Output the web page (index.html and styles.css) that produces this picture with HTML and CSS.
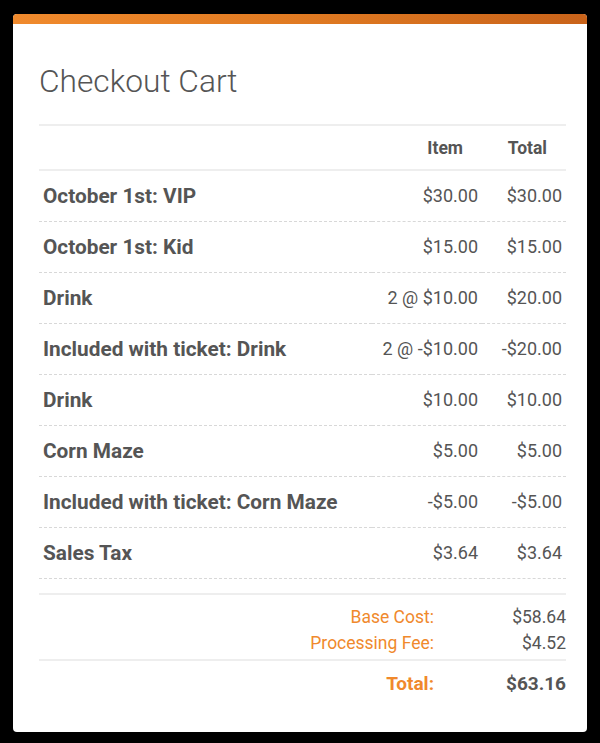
FILE: index.html
```html
<!DOCTYPE html>
<html>
<head>
<meta charset="utf-8">
<link rel="stylesheet" href="styles.css">
</head>
<body>
<div class="card">
  <div class="bar"></div>
  <div class="content">
    <h1 class="title">Checkout Cart</h1>
    <table class="cart">
      <thead>
        <tr><th class="name"></th><th class="item">Item</th><th class="total">Total</th></tr>
      </thead>
      <tbody>
        <tr><td class="name">October 1st: VIP</td><td class="item">$30.00</td><td class="total">$30.00</td></tr>
        <tr><td class="name">October 1st: Kid</td><td class="item">$15.00</td><td class="total">$15.00</td></tr>
        <tr><td class="name">Drink</td><td class="item">2 @ $10.00</td><td class="total">$20.00</td></tr>
        <tr><td class="name">Included with ticket: Drink</td><td class="item">2 @ -$10.00</td><td class="total">-$20.00</td></tr>
        <tr><td class="name">Drink</td><td class="item">$10.00</td><td class="total">$10.00</td></tr>
        <tr><td class="name">Corn Maze</td><td class="item">$5.00</td><td class="total">$5.00</td></tr>
        <tr><td class="name">Included with ticket: Corn Maze</td><td class="item">-$5.00</td><td class="total">-$5.00</td></tr>
        <tr><td class="name">Sales Tax</td><td class="item">$3.64</td><td class="total">$3.64</td></tr>
      </tbody>
    </table>
    <div class="summary">
      <div class="sum-row"><span class="label">Base Cost:</span><span class="value">$58.64</span></div>
      <div class="sum-row"><span class="label">Processing Fee:</span><span class="value">$4.52</span></div>
    </div>
    <div class="grand">
      <div class="sum-row"><span class="label">Total:</span><span class="value">$63.16</span></div>
    </div>
  </div>
</div>
</body>
</html>
```

FILE: styles.css
```css
html, body {
  margin: 0;
  padding: 0;
  background: #000;
}
body {
  font-family: Roboto, "Liberation Sans", sans-serif;
  color: #555;
}
.card {
  margin: 14px 0 0 13px;
  width: 574px;
  height: 718px;
  background: #fff;
  border-radius: 4px;
  overflow: hidden;
}
.bar {
  height: 10px;
  background: linear-gradient(90deg, #f08a2d 0%, #e07a22 50%, #c9631a 100%);
}
.content {
  padding: 0 21px 0 26px;
}
.title {
  margin: 40px 0 0 0;
  font-size: 31.7px;
  line-height: 36px;
  font-weight: 300;
  color: #555;
  padding-bottom: 24px;
  border-bottom: 2px solid #eee;
}
.cart {
  width: 100%;
  border-collapse: collapse;
}
.cart th,
.cart td {
  box-sizing: border-box;
}
.cart th {
  height: 44px;
  font-size: 17.5px;
  font-weight: 700;
  text-align: right;
  padding: 0 19px 0 4px;
  border-bottom: 2px solid #eee;
}
.cart td {
  height: 51px;
  padding: 0 4px;
  border-bottom: 1px dashed #d8d8d8;
  font-size: 18px;
  text-align: right;
  white-space: nowrap;
}
.cart td.name {
  text-align: left;
  font-size: 20.8px;
  font-weight: 700;
}
.cart .item {
  width: 110px;
}
.cart .total {
  width: 84px;
}
.summary {
  margin-top: 14px;
  border-top: 2px solid #eee;
  padding: 9px 0 3px;
}
.grand {
  border-top: 2px solid #eee;
  padding-top: 10px;
}
.sum-row {
  display: flex;
  justify-content: flex-end;
  line-height: 26px;
  font-size: 17.5px;
}
.sum-row .label {
  color: #f0892c;
  text-align: right;
}
.sum-row .value {
  width: 132px;
  text-align: right;
}
.grand .label,
.grand .value {
  font-weight: 700;
  font-size: 19px;
}
```
